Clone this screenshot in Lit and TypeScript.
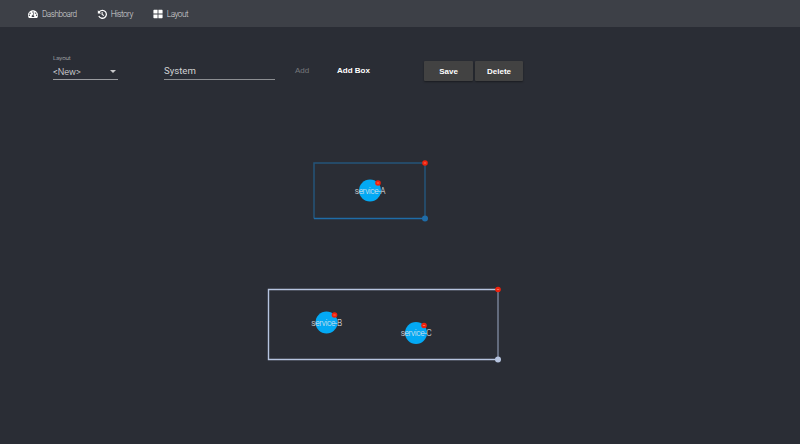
import { LitElement, html, css, svg } from "lit";
import { customElement } from "lit/decorators.js";

interface Node { name: string; x: number; y: number; }
interface Box { x: number; y: number; w: number; h: number; cls: string; nodes: Node[]; }

const BOXES: Box[] = [
  { x: 314, y: 163, w: 111, h: 55.5, cls: "blue", nodes: [{ name: "service-A", x: 370, y: 190.5 }] },
  { x: 268.5, y: 289.5, w: 229.5, h: 70, cls: "pale", nodes: [
    { name: "service-B", x: 326.5, y: 322.5 },
    { name: "service-C", x: 416, y: 333 },
  ] },
];

@customElement("app-root")
export class AppRoot extends LitElement {
  static styles = css`
    :host { display: block; width: 800px; height: 444px; background: #2a2d35; font-family: Roboto, "Liberation Sans", sans-serif; color: #fff; overflow: hidden; }
    .nav { height: 27px; background: #3d4047; display: flex; align-items: center; padding-left: 28px; gap: 20px; box-sizing: border-box; }
    .nav a { display: flex; align-items: center; gap: 4px; font-size: 8.2px; font-weight: 300; color: #d8d9db; letter-spacing: -0.5px; }
    .nav svg { width: 10px; height: 10px; fill: #fff; display: block; }
    .toolbar { display: flex; align-items: flex-end; padding: 27px 0 0 53px; height: 53px; box-sizing: border-box; }
    .select { width: 65px; display: flex; flex-direction: column; margin-right: 46px; }
    .select label { font-size: 6.2px; font-weight: 300; color: #c6c7ca; line-height: 8px; margin-bottom: 1px; letter-spacing: -0.1px; }
    .select .val { height: 16px; display: flex; align-items: center; justify-content: space-between; font-size: 9.2px; font-weight: 300; color: #e8e8ea; border-bottom: 1px solid #9a9ca0; padding-right: 2px; }
    .arrow { width: 0; height: 0; border-left: 3px solid transparent; border-right: 3px solid transparent; border-top: 3px solid #c9cacc; }
    .field { width: 111px; height: 17px; display: flex; align-items: center; font-size: 9.6px; font-weight: 400; color: #d0d1d3; border-bottom: 1px solid #8c8e92; margin-right: 20px; padding-bottom: 2px; box-sizing: border-box; }
    .flat { font-size: 8px; line-height: 16px; margin-bottom: 1px; font-family: "Liberation Sans", Roboto, sans-serif; }
    .add { color: #76787c; width: 42px; font-weight: 400; }
    .addbox { color: #fff; width: 87px; font-weight: 700; }
    .btns { display: flex; gap: 2px; margin-bottom: -1px; }
    .btn { width: 49px; height: 20px; background: #424242; border-radius: 1px; display: flex; align-items: center; justify-content: center; font-family: "Liberation Sans", Roboto, sans-serif; font-size: 8px; font-weight: 700; color: #fff; box-shadow: 0 1px 2px rgba(0,0,0,.4); }
    .btn + .btn { width: 48px; }
    .canvas { display: block; position: absolute; left: 0; top: 0; width: 800px; height: 444px; }
    .canvas text { font-family: Roboto, sans-serif; font-weight: 300; font-size: 8.4px; letter-spacing: -0.35px; fill: #e6e8ea; text-anchor: middle; }
    .blue { stroke: #1f6ca8; stroke-width: 1.5; fill: none; }
    .blue-top { stroke: #25547a; stroke-width: 1.5; fill: none; }
    .pale { stroke: #b6c4df; stroke-width: 1.4; fill: none; }
    .pale-side { stroke: #7c879d; stroke-width: 1.4; fill: none; }
    .dot-blue { fill: #1f6ca8; }
    .dot-pale { fill: #b6c4df; }
    .red { fill: #f0210c; }
    .node { fill: #03a9f4; }
    .minus { stroke: #ff8a70; stroke-width: .7; }
  `;

  private box(b: Box) {
    const right = b.x + b.w;
    const bottom = b.y + b.h;
    const base = b.cls;
    const muted = b.cls === "blue" ? "blue-top" : "pale-side";
    const mutedPath = b.cls === "blue"
      ? `M${b.x} ${bottom}V${b.y}H${right}V${bottom}`
      : `M${right} ${b.y}V${bottom}`;
    const basePath = b.cls === "blue"
      ? `M${b.x} ${bottom}H${right}`
      : `M${right} ${bottom}H${b.x}V${b.y}H${right}`;
    return svg`
      <path class=${muted} d=${mutedPath}></path>
      <path class=${base} d=${basePath}></path>
      <circle class=${"dot-" + base} cx=${right} cy=${bottom} r="3"></circle>
      <circle class="red" cx=${right} cy=${b.y} r="2.8"></circle>
      <path class="minus" d=${`M${right - 1.2} ${b.y}h2.4`}></path>
      ${b.nodes.map(n => svg`
        <circle class="node" cx=${n.x} cy=${n.y} r="11"></circle>
        <circle class="red" cx=${n.x + 8} cy=${n.y - 7.5} r="2.8"></circle>
        <path class="minus" d=${`M${n.x + 6.8} ${n.y - 7.5}h2.4`}></path>
        <text x=${n.x} y=${n.y + 3}>${n.name}</text>
      `)}
    `;
  }

  render() {
    return html`
      <div class="nav">
        <a><svg viewBox="0 0 24 24"><path d="M12 3C5.4 3 0 8.4 0 15c0 2.2.6 4.3 1.700 6 .3.5.8.7 1.300.7h18c.5 0 1-.2 1.300-.7 1.100-1.700 1.700-3.800 1.700-6 0-6.600-5.400-12-12-12zm0 2.500a1.700 1.700 0 1 1 0 3.400 1.700 1.700 0 0 1 0-3.400zM5 8.500a1.700 1.700 0 1 1 0 3.400 1.700 1.700 0 0 1 0-3.400zM3.300 16.700a1.700 1.700 0 1 1 0-3.400 1.700 1.700 0 0 1 0 3.400zm11.200 2.500h-5a2.500 2.500 0 0 1 1.300-4.400l3.200-6.500 1.300.6-2.700 6.200a2.500 2.500 0 0 1 1.900 4.100zm2.500-8.600a1.700 1.700 0 1 1 3 0 1.700 1.700 0 0 1-3 0zm3.700 6.100a1.700 1.700 0 1 1 0-3.400 1.700 1.700 0 0 1 0 3.400z"></path></svg>Dashboard</a>
        <a><svg viewBox="0 0 24 24"><path d="M2 3l2.600 2.600A11 11 0 1 1 3 17.500l2.700-1.500a8 8 0 1 0 1-8.400L10 11H2V3z"></path><path d="M11 7h2.500v5.300l3.600 2.200-1.200 2-4.900-3z"></path></svg>History</a>
        <a><svg viewBox="0 0 24 24"><path d="M1 3.500A1.500 1.500 0 0 1 2.500 2H11v9H1zM13 2h8.500A1.500 1.500 0 0 1 23 3.500V11H13zM1 13h10v9H2.500A1.500 1.500 0 0 1 1 20.500zM13 13h10v7.500a1.500 1.500 0 0 1-1.500 1.500H13z"></path></svg>Layout</a>
      </div>
      <div class="toolbar">
        <div class="select">
          <label>Layout</label>
          <div class="val"><span>&lt;New&gt;</span><i class="arrow"></i></div>
        </div>
        <div class="field">System</div>
        <div class="flat add">Add</div>
        <div class="flat addbox">Add Box</div>
        <div class="btns">
          <div class="btn">Save</div>
          <div class="btn">Delete</div>
        </div>
      </div>
      <svg class="canvas" viewBox="0 0 800 444">${BOXES.map(b => this.box(b))}</svg>
    `;
  }
}
